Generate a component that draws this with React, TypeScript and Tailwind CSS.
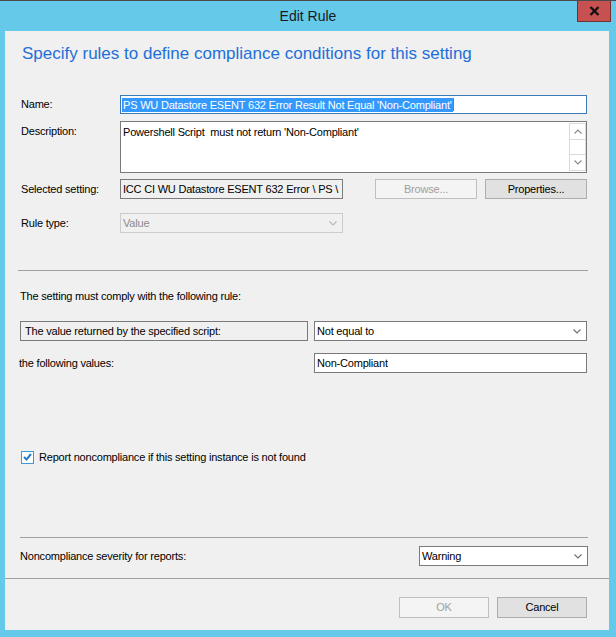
import React from "react";

function Chevron({ up = false, color = "#606060" }: { up?: boolean; color?: string }) {
  return (
    <svg width="8" height="5" viewBox="0 0 8 5" className="shrink-0">
      <polyline
        points={up ? "0.5,4.5 4,1 7.5,4.5" : "0.5,0.5 4,4 7.5,0.5"}
        fill="none"
        stroke={color}
        strokeWidth="1.1"
      />
    </svg>
  );
}

function Combo({ value, disabled = false, className = "" }: { value: string; disabled?: boolean; className?: string }) {
  return (
    <div
      className={`h-[20px] flex items-center justify-between pl-[2px] pr-[5px] border ${
        disabled ? "border-[#cccccc] bg-[#f0f0f0] text-[#8a8a8a]" : "border-[#7a7a7a] bg-white text-black"
      } ${className}`}
    >
      <span>{value}</span>
      <Chevron color={disabled ? "#b8b8b8" : "#707070"} />
    </div>
  );
}

function Button({ label, disabled = false, className = "" }: { label: string; disabled?: boolean; className?: string }) {
  return (
    <div
      className={`flex items-center justify-center border ${
        disabled ? "border-[#bfbfbf] bg-[#f4f4f4] text-[#a0a0a0]" : "border-[#adadad] bg-[#e1e1e1] text-black"
      } ${className}`}
    >
      {label}
    </div>
  );
}

export default function App() {
  return (
    <div className="w-[616px] h-[637px] bg-[#65c9ea] border-t border-[#4a4a4a] flex flex-col font-['Liberation_Sans',Arial,sans-serif] overflow-hidden">
      {/* title bar */}
      <div className="relative h-[30px] flex items-center justify-center">
        <span className="text-[14px] text-[#1b1b1b]">Edit Rule</span>
        <div className="absolute top-[-1px] left-[577px] w-[34px] h-[22px] bg-[#c75050] border border-[#6e3030] flex items-center justify-center">
          <svg width="11" height="10" viewBox="0 0 11 10">
            <path d="M1.5 1 L9.5 9 M9.5 1 L1.5 9" stroke="#111" strokeWidth="2.4" />
          </svg>
        </div>
      </div>

      {/* client area */}
      <div className="ml-[5px] w-[604px] h-[599px] bg-[#f0f0f0] flex flex-col text-[11px] tracking-[-0.2px] text-black">
        <div className="mt-[13px] pl-[17px] h-[20px] leading-[20px] text-[17px] tracking-normal text-[#1e6fd9]">
          Specify rules to define compliance conditions for this setting
        </div>

        {/* Name */}
        <div className="mt-[31px] flex items-center h-[19px] pl-[16px]">
          <span className="w-[99px]">Name:</span>
          <div className="w-[467px] h-[19px] border border-[#3b79b8] bg-white flex items-center pl-[1px] overflow-hidden whitespace-nowrap">
            <span className="bg-[#3399ff] text-white leading-[14px] px-[1px]">
              PS WU Datastore ESENT 632 Error Result Not Equal 'Non-Compliant'
            </span>
            <span className="w-px h-[13px] bg-[#c26a1c]" />
          </div>
        </div>

        {/* Description */}
        <div className="mt-[7px] flex pl-[16px]">
          <span className="w-[99px] pt-[2px]">Description:</span>
          <div className="w-[467px] h-[52px] border border-[#7a7a7a] bg-white flex">
            <div className="flex-1 pl-[2px] pt-[2px] whitespace-pre">Powershell Script  must not return 'Non-Compliant'</div>
            <div className="w-[17px] flex flex-col justify-between border border-[#dadada] my-[1px]">
              <div className="h-[16px] flex items-center justify-center border-b border-[#dadada]">
                <Chevron up color="#8a8a8a" />
              </div>
              <div className="h-[16px] flex items-center justify-center border-t border-[#dadada]">
                <Chevron color="#8a8a8a" />
              </div>
            </div>
          </div>
        </div>

        {/* Selected setting */}
        <div className="mt-[6px] flex items-center h-[20px] pl-[16px]">
          <span className="w-[99px]">Selected setting:</span>
          <div className="w-[223px] h-[20px] border border-[#7a7a7a] bg-[#f0f0f0] flex items-center pl-[2px] overflow-hidden whitespace-nowrap">
            ICC CI WU Datastore ESENT 632 Error \ PS \
          </div>
          <Button label="Browse..." disabled className="ml-[32px] w-[102px] h-[20px]" />
          <Button label="Properties..." className="ml-[8px] w-[102px] h-[20px]" />
        </div>

        {/* Rule type */}
        <div className="mt-[14px] flex items-center h-[20px] pl-[16px]">
          <span className="w-[99px]">Rule type:</span>
          <Combo value="Value" disabled className="w-[223px]" />
        </div>

        <div className="mt-[37px] ml-[13px] w-[570px] h-px bg-[#a0a0a0]" />

        <div className="mt-[18px] pl-[15px] h-[14px] leading-[14px]">The setting must comply with the following rule:</div>

        <div className="mt-[18px] flex items-center h-[20px] pl-[15px]">
          <div className="w-[288px] h-[20px] border border-[#7a7a7a] flex items-center pl-[4px]">
            The value returned by the specified script:
          </div>
          <Combo value="Not equal to" className="ml-[6px] w-[273px]" />
        </div>

        <div className="mt-[12px] flex items-center h-[20px] pl-[14px]">
          <span className="w-[295px]">the following values:</span>
          <div className="w-[273px] h-[20px] border border-[#7a7a7a] bg-white flex items-center pl-[2px]">Non-Compliant</div>
        </div>

        {/* checkbox */}
        <div className="mt-[77px] flex items-center h-[14px] pl-[16px]">
          <div className="w-[13px] h-[13px] border border-[#3c9ad6] bg-white flex items-center justify-center">
            <svg width="9" height="8" viewBox="0 0 9 8">
              <polyline points="1,4 3.5,6.5 8,1" fill="none" stroke="#2a7dc9" strokeWidth="2" />
            </svg>
          </div>
          <span className="ml-[5px]">Report noncompliance if this setting instance is not found</span>
        </div>

        <div className="mt-[73px] ml-[15px] w-[568px] h-px bg-[#a0a0a0]" />

        <div className="mt-[8px] flex items-center justify-between h-[20px] pl-[15px] pr-[21px]">
          <span>Noncompliance severity for reports:</span>
          <Combo value="Warning" className="w-[169px]" />
        </div>

        <div className="mt-[12px] w-full h-px bg-[#a0a0a0]" />

        <div className="mt-[18px] flex justify-end gap-[8px] pr-[22px]">
          <Button label="OK" disabled className="w-[90px] h-[21px]" />
          <Button label="Cancel" className="w-[90px] h-[21px]" />
        </div>
      </div>
    </div>
  );
}
